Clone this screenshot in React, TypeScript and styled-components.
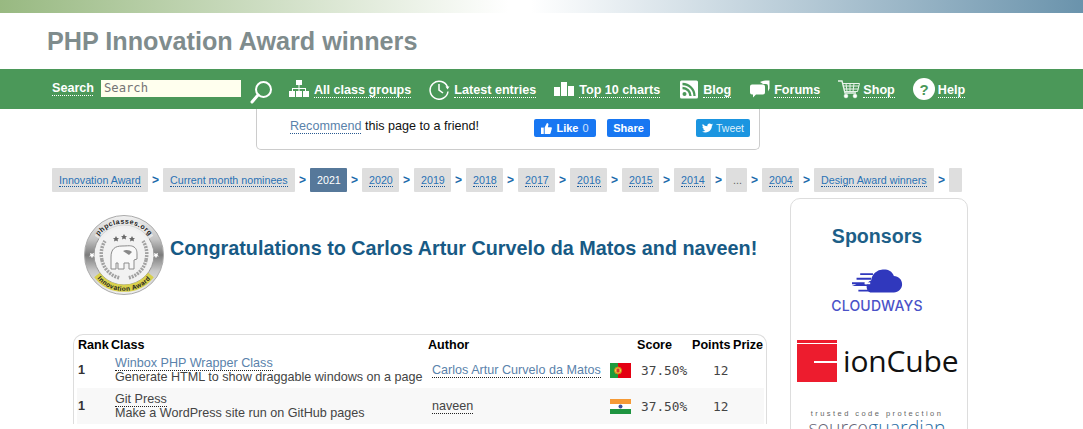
import React from "react";
import styled, { createGlobalStyle } from "styled-components";

const Global = createGlobalStyle`
  html, body { margin: 0; padding: 0; background: #fff; height: 429px; overflow: hidden; }
  body { font-family: "Liberation Sans", Arial, sans-serif; color: #222; }
  a { text-decoration: none; }
`;

const Page = styled.div`
  width: 1083px;
  height: 429px;
  overflow: hidden;
`;
const TopStrip = styled.div`
  height: 13px;
  background: linear-gradient(to right, #98b981 0%, #ffffff 47%, #ffffff 49%, #6a93ac 100%);
`;
const TitleBar = styled.header`
  height: 56px;
  display: flex;
  align-items: center;
  padding-left: 47px;
`;
const Title = styled.h1`
  margin: 0;
  font-size: 25.2px;
  font-weight: 700;
  color: #7f8c8d;
`;
const NavBar = styled.nav`
  height: 40px;
  background: #4b9859;
  display: flex;
  align-items: center;
  padding-left: 52px;
`;
const SearchLabel = styled.a`
  color: #fff;
  font-size: 12.6px;
  font-weight: 700;
  border-bottom: 1px dotted #fff;
  line-height: 14px;
  margin-top: -2px;
  margin-right: 8px;
  width: 41px;
`;
const SearchInput = styled.input`
  width: 140px;
  height: 17px;
  box-sizing: border-box;
  border: 0;
  padding: 0 3px;
  margin-top: -2px;
  background: #ffffee;
  font-family: "DejaVu Sans Mono", monospace;
  font-size: 12.2px;
  &::placeholder { color: #757575; opacity: 1; }
`;
const SearchButton = styled.span`
  display: flex;
  margin-left: 9px;
  margin-right: 16px;
  margin-top: 5px;
`;
const NavItem = styled.a<{ $gap: number; $after: number }>`
  display: flex;
  align-items: center;
  gap: ${(p) => p.$gap}px;
  margin-right: ${(p) => p.$after}px;
`;
const NavText = styled.span`
  color: #fff;
  font-size: 12.6px;
  font-weight: 700;
  line-height: 14px;
  border-bottom: 1px dotted #fff;
  margin-top: 3px;
`;

const ShareBox = styled.div`
  width: 504px;
  height: 41px;
  margin-left: 256px;
  box-sizing: border-box;
  border: 1px solid #ccc;
  border-top: 0;
  border-radius: 0 0 5px 5px;
  display: flex;
  align-items: flex-start;
  padding: 10px 9px 0 33px;
`;
const RecommendText = styled.div`
  font-size: 12.6px;
  line-height: 14px;
  color: #111;
  width: 244px;
`;
const BlueLink = styled.a`
  color: #5a82ab;
  border-bottom: 1px dotted #2a5a90;
`;
const FbButton = styled.span<{ $w: number; $after: number }>`
  width: ${(p) => p.$w}px;
  height: 18px;
  margin-right: ${(p) => p.$after}px;
  background: #1877f2;
  border-radius: 2px;
  color: #fff;
  font-size: 11px;
  font-weight: 700;
  display: flex;
  align-items: center;
  justify-content: center;
  gap: 4px;
`;
const FbCount = styled.span`
  font-weight: 400;
  opacity: 0.8;
`;
const TweetButton = styled.span`
  width: 54px;
  height: 18px;
  margin-left: auto;
  background: #1b95e0;
  border-radius: 2px;
  color: #dff0fb;
  font-size: 10.5px;
  display: flex;
  align-items: center;
  justify-content: center;
  gap: 3px;
`;

const Crumbs = styled.div`
  display: flex;
  align-items: center;
  margin: 18px 0 0 52px;
  height: 24px;
`;
const Crumb = styled.span<{ $active?: boolean; $w?: number }>`
  height: 24px;
  width: ${(p) => (p.$w ? `${p.$w}px` : "13px")};
  flex-shrink: 0;
  box-sizing: border-box;
  padding: 0 0 0 7px;
  display: flex;
  align-items: center;
  font-size: 10.7px;
  white-space: nowrap;
  border-radius: 1px;
  background: ${(p) => (p.$active ? "#56789a" : "#dedede")};
  color: ${(p) => (p.$active ? "#fff" : "#666")};
`;
const CrumbLink = styled.a`
  color: #2a72b5;
  line-height: 12px;
  border-bottom: 1px dotted #1a5a9a;
`;
const Sep = styled.span`
  width: 7px;
  margin: 0 4px;
  font-size: 12px;
  font-weight: 700;
  color: #1a6bab;
`;

const Main = styled.div`
  display: flex;
  align-items: flex-start;
  margin-top: 6px;
`;
const LeftColumn = styled.main`
  width: 694px;
  margin-left: 73px;
  margin-right: 23px;
`;
const Congrats = styled.div`
  display: flex;
  align-items: center;
  height: 80px;
  margin: 17px 0 39px 11px;
  gap: 6px;
`;
const CongratsTitle = styled.h2`
  margin: -14px 0 0;
  font-size: 19.8px;
  font-weight: 700;
  color: #175a85;
  white-space: nowrap;
`;
const Table = styled.div`
  box-sizing: border-box;
  width: 694px;
  border: 1px solid #ddd;
  border-bottom: 0;
  border-radius: 10px 10px 0 0;
  padding: 0 2px 0 3px;
`;
const cols = "33px 317px 179px 30px 55px 41px 31px";
const HeadRow = styled.div`
  display: grid;
  grid-template-columns: ${cols};
  height: 19px;
  align-items: center;
`;
const HeadCell = styled.div<{ $span?: number }>`
  grid-column: span ${(p) => p.$span ?? 1};
  font-size: 12.6px;
  font-weight: 700;
  color: #000;
  padding-left: 1px;
  white-space: nowrap;
`;
const Row = styled.div<{ $even?: boolean; $h: number }>`
  display: grid;
  box-sizing: border-box;
  grid-template-columns: ${cols};
  height: ${(p) => p.$h}px;
  padding-bottom: ${(p) => (p.$even ? 0 : 2)}px;
  align-items: center;
  background: ${(p) => (p.$even ? "#f8f8f8" : "#fff")};
`;
const RankCell = styled.div`
  font-size: 12.6px;
  font-weight: 700;
  color: #333;
  padding-left: 1px;
`;
const ClassCell = styled.div`
  padding-left: 5px;
  font-size: 12.6px;
  line-height: 14px;
  color: #444;
  white-space: nowrap;
`;
const ClassLink = styled.a<{ $dark?: boolean }>`
  display: inline-block;
  color: ${(p) => (p.$dark ? "#444" : "#5a82ab")};
  line-height: 13px;
  border-bottom: 1px dotted #222;
  vertical-align: top;
`;
const ClassDesc = styled.div`
  margin-top: -1px;
`;
const AuthorCell = styled.div`
  padding-left: 5px;
  font-size: 12.6px;
  white-space: nowrap;
`;
const AuthorLink = styled.a<{ $dark?: boolean }>`
  color: ${(p) => (p.$dark ? "#444" : "#5a82ab")};
  border-bottom: 1px dotted #222;
`;
const FlagCell = styled.div`
  display: flex;
  padding-left: 4px;
`;
const MonoCell = styled.div<{ $pad: number }>`
  font-family: "DejaVu Sans Mono", monospace;
  font-size: 12.8px;
  color: #444;
  padding-left: ${(p) => p.$pad}px;
`;

const Sidebar = styled.aside`
  box-sizing: border-box;
  width: 178px;
  height: 260px;
  border: 1px solid #ddd;
  border-radius: 10px;
  padding-right: 4px;
  display: flex;
  flex-direction: column;
  align-items: center;
`;
const SponsorTitle = styled.h3`
  margin: 25px 0 0;
  font-size: 19.6px;
  line-height: 24px;
  font-weight: 700;
  color: #1d5f88;
`;
const CloudWrap = styled.div`
  margin-top: 19px;
  display: flex;
  height: 28px;
`;
const CloudText = styled.div`
  font-family: "Inter", "Liberation Sans", sans-serif;
  font-size: 14px;
  font-weight: 500;
  line-height: 16px;
  letter-spacing: 0.2px;
  color: #4a52c8;
  margin-top: 3px;
`;
const IonRow = styled.div`
  display: flex;
  align-items: center;
  align-self: flex-start;
  margin: 25px 0 0 6px;
  gap: 6px;
`;
const IonText = styled.span`
  font-family: "Open Sans", sans-serif;
  font-size: 30px;
  line-height: 42px;
  color: #111;
  letter-spacing: -0.15px;
  margin-top: 1px;
`;
const SgTagline = styled.div`
  margin-top: 27px;
  font-size: 7.5px;
  line-height: 9px;
  letter-spacing: 2.45px;
  color: #666;
  white-space: nowrap;
`;
const SgName = styled.div`
  font-family: "Open Sans", sans-serif;
  font-size: 19.5px;
  font-weight: 300;
  line-height: 19px;
  color: #667;
`;
const SgBlue = styled.span`
  color: #2a6ea5;
`;

const I = { w: "#fff" };

const SearchIcon = () => (
  <svg width="23" height="24" viewBox="0 0 23 24" fill="none" stroke={I.w}>
    <circle cx="13.5" cy="9.5" r="7.5" strokeWidth="2" />
    <path d="M8 15 L2 22" strokeWidth="3" strokeLinecap="round" />
  </svg>
);
const TreeIcon = () => (
  <svg width="20" height="18" viewBox="0 0 20 18" fill={I.w}>
    <rect x="7" y="0" width="6" height="5" />
    <path d="M9.500 5h1v3H17v3h-1V9h-5.500v2h-1V9H4v2H3V8h6.500z" />
    <rect x="0" y="11" width="6" height="6" />
    <rect x="7" y="11" width="6" height="6" />
    <rect x="14" y="11" width="6" height="6" />
  </svg>
);
const ClockIcon = () => (
  <svg width="21" height="21" viewBox="0 0 21 21" fill="none" stroke={I.w} strokeWidth="1.5">
    <path d="M18.500 8A9 9 0 1 0 19 12.500" />
    <path d="M10 5v6l4 3" />
    <path d="M16.500 7.500h4l-2 3z" fill={I.w} stroke="none" />
  </svg>
);
const BarsIcon = () => (
  <svg width="20" height="14" viewBox="0 0 20 14" fill={I.w}>
    <rect x="0" y="5" width="6" height="9" />
    <rect x="7" y="0" width="6" height="14" />
    <rect x="14" y="4" width="6" height="10" />
  </svg>
);
const RssIcon = () => (
  <svg width="18" height="19" viewBox="0 0 18 18">
    <rect width="18" height="18" rx="1.500" fill={I.w} />
    <circle cx="4.500" cy="13.500" r="2" fill="#4b9859" />
    <path d="M2.500 7.500a8 8 0 0 1 8 8M2.500 3.500a12 12 0 0 1 12 12" fill="none" stroke="#4b9859" strokeWidth="2.300" />
  </svg>
);
const ForumIcon = () => (
  <svg width="21" height="18" viewBox="0 0 21 18" fill={I.w}>
    <path d="M11 2c3-1.500 6-1.500 9.500-1.500v8l-1.500 3V6a2 2 0 0 0-2-2h-3z" />
    <path d="M3 4.500h11a2 2 0 0 1 2 2v6a2 2 0 0 1-2 2H7l-3 3v-3H3a2 2 0 0 1-2-2v-6a2 2 0 0 1 2-2z" />
  </svg>
);
const CartIcon = () => (
  <svg width="22" height="19" viewBox="0 0 22 19" fill="none" stroke="#e8f3ea" strokeWidth="1">
    <path d="M0 1h4l3 12h11" strokeWidth="1.400" />
    <path d="M4.500 3.500H21.500l-2 8H6.500M8 3.500l1 8M12 3.500v8M16 3.500l-1 8M5 6h16M6 9h14.500" />
    <circle cx="8" cy="16" r="1.800" fill={I.w} />
    <circle cx="17" cy="16" r="1.800" fill={I.w} />
  </svg>
);
const HelpIcon = () => (
  <svg width="22" height="22" viewBox="0 0 22 22">
    <circle cx="11" cy="11" r="11" fill={I.w} />
    <text x="11" y="16.500" textAnchor="middle" fontFamily="Liberation Sans" fontWeight="700" fontSize="15" fill="#4b9859">?</text>
  </svg>
);
const ThumbIcon = () => (
  <svg width="11" height="11" viewBox="0 0 12 12" fill="#fff">
    <rect x="0" y="5" width="3" height="7" />
    <path d="M4 5l2.500-5c1.500 0 2 1 1.500 2.500L7.500 4.500H11c1 0 1 1 .8 1.500L10.500 11c-.2.600-.5 1-1 1H4z" />
  </svg>
);
const BirdIcon = () => (
  <svg width="11" height="10" viewBox="0 0 24 20" fill="#fff">
    <path d="M24 2.400a9.800 9.800 0 0 1-2.800.8A4.900 4.900 0 0 0 23.300.5a9.800 9.800 0 0 1-3.100 1.200 4.900 4.900 0 0 0-8.400 4.500A14 14 0 0 1 1.700 1a4.900 4.900 0 0 0 1.500 6.600 4.900 4.900 0 0 1-2.200-.6c0 2.400 1.700 4.400 4 4.900a4.900 4.900 0 0 1-2.200.1 4.900 4.900 0 0 0 4.600 3.400A9.900 9.900 0 0 1 0 17.400 14 14 0 0 0 7.500 19.600c9.100 0 14-7.500 14-14v-.6A10 10 0 0 0 24 2.400z" />
  </svg>
);

const Medal = () => (
  <svg width="80" height="80" viewBox="0 0 80 80">
    <defs>
      <linearGradient id="ring" x1="0" y1="0" x2="0" y2="1">
        <stop offset="0" stopColor="#f2f2f2" />
        <stop offset="0.3" stopColor="#c4c4c4" />
        <stop offset="0.5" stopColor="#7c7c7c" />
        <stop offset="0.7" stopColor="#c8c8c8" />
        <stop offset="1" stopColor="#f0f0f0" />
      </linearGradient>
    </defs>
    <circle cx="40" cy="40" r="39.500" fill="url(#ring)" />
    <circle cx="40" cy="40" r="39.500" fill="none" stroke="#aaa" />
    <circle cx="40" cy="40" r="30" fill="#f2f2f2" stroke="#999" />
    <path d="M18 45a23 23 0 0 0 18 18M62 45a23 23 0 0 1-18 18M18 45a24 24 0 0 1 3-19M62 45a24 24 0 0 0-3-19" fill="none" stroke="#a2a2a2" strokeWidth="3.500" strokeDasharray="2 1" />
    <path d="M27 42c0-8 4-11 11-11 6 0 9-1 12 1 3 2 3 5 3 8v4l-3 1v9h-5v-6h-5v6h-6v-6h-2v6h-5z" fill="#f8f8f8" stroke="#8c8c8c" />
    <path d="M39 36c3-2 7-1 9 1l-3 3z" fill="#888" />
    <path d="M6 38l2 .8 2-.8-.5 2 1.500 1.500-2-.2-1 2-1-2-2 .2L6.500 40zM70 38l2 .8 2-.8-.5 2 1.500 1.500-2-.2-1 2-1-2-2 .2L70.500 40z" fill="#fff" />
    <path d="M32 21l1 2 2 .2-1.500 1.300.5 2-2-1-2 1 .5-2L29 23.200l2-.2zM40 19l1 2 2 .2-1.500 1.300.5 2-2-1-2 1 .5-2L37 21.200l2-.2zM48 21l1 2 2 .2-1.500 1.300.5 2-2-1-2 1 .5-2L45 23.200l2-.2z" fill="#666" />
    <path d="M14 23a31 31 0 0 1 52 0" fill="none" stroke="#eee" strokeWidth="8" opacity="0.7" />
    <path d="M13 60a34 34 0 0 0 54 0" fill="none" stroke="#d8d04c" strokeWidth="7" />
    <path id="topArc" d="M11 27a32 32 0 0 1 58 0" fill="none" />
    <path id="bottomArc" d="M12 62a35 35 0 0 0 56 0" fill="none" />
    <text fontFamily="Liberation Sans" fontWeight="700" fontSize="7" fill="#222" letterSpacing="0.5">
      <textPath href="#topArc" startOffset="50%" textAnchor="middle">phpclasses.org</textPath>
    </text>
    <text fontFamily="Liberation Sans" fontWeight="700" fontSize="6.5" fill="#222" letterSpacing="0.4">
      <textPath href="#bottomArc" startOffset="50%" textAnchor="middle">Innovation Award</textPath>
    </text>
  </svg>
);
const CloudLogo = () => (
  <svg width="51" height="28" viewBox="0 0 56 29" fill="#3038bd">
    <path d="M20 27a7 7 0 0 1 1-13 13 13 0 0 1 14-12c5 0 9 2 11 7 5 0 9 4 9 9s-4 9-9 9z" />
    <path d="M9 6h14v2H9zM5 11h16v2H5zM0 16h14v2H0zM0 20h19v-2H5zM7 24h12v2H7z" />
    <rect x="14" y="16" width="6" height="2" fill="#fff" />
  </svg>
);
const IonBox = () => (
  <svg width="40" height="42" viewBox="0 0 40 42">
    <rect width="40" height="42" fill="#ed1c2e" />
    <rect y="3" width="40" height="1" fill="#fff" />
    <rect x="17" y="21" width="23" height="2" fill="#fff" />
  </svg>
);
const PortugalFlag = () => (
  <svg width="21" height="15" viewBox="0 0 21 15">
    <rect width="21" height="15" fill="#e40012" />
    <rect width="8" height="15" fill="#1f9a3d" />
    <circle cx="8" cy="7.500" r="3.500" fill="#f3d24a" stroke="#c68a10" />
    <rect x="6.500" y="5.500" width="3" height="4" fill="#d8362a" />
  </svg>
);
const IndiaFlag = () => (
  <svg width="21" height="15" viewBox="0 0 21 15">
    <rect width="21" height="5" fill="#f59a36" />
    <rect y="5" width="21" height="5" fill="#fff" />
    <rect y="10" width="21" height="5" fill="#1e9440" />
    <circle cx="10.500" cy="7.500" r="2" fill="#3a4f9a" />
  </svg>
);

const years = ["2020", "2019", "2018", "2017", "2016", "2015", "2014"];

export default function App() {
  return (
    <Page>
      <Global />
      <TopStrip />
      <TitleBar>
        <Title>PHP Innovation Award winners</Title>
      </TitleBar>
      <NavBar>
        <SearchLabel>Search</SearchLabel>
        <SearchInput placeholder="Search" />
        <SearchButton><SearchIcon /></SearchButton>
        <NavItem $gap={5} $after={18}><TreeIcon /><NavText>All class groups</NavText></NavItem>
        <NavItem $gap={4} $after={18}><ClockIcon /><NavText>Latest entries</NavText></NavItem>
        <NavItem $gap={5} $after={20}><BarsIcon /><NavText>Top 10 charts</NavText></NavItem>
        <NavItem $gap={5} $after={18}><RssIcon /><NavText>Blog</NavText></NavItem>
        <NavItem $gap={4} $after={18}><ForumIcon /><NavText>Forums</NavText></NavItem>
        <NavItem $gap={3} $after={18}><CartIcon /><NavText>Shop</NavText></NavItem>
        <NavItem $gap={3} $after={0}><HelpIcon /><NavText>Help</NavText></NavItem>
      </NavBar>
      <ShareBox>
        <RecommendText><BlueLink>Recommend</BlueLink> this page to a friend!</RecommendText>
        <FbButton $w={62} $after={11}><ThumbIcon />Like <FbCount>0</FbCount></FbButton>
        <FbButton $w={43} $after={0}>Share</FbButton>
        <TweetButton><BirdIcon />Tweet</TweetButton>
      </ShareBox>
      <Crumbs>
        <Crumb $w={96}><CrumbLink>Innovation Award</CrumbLink></Crumb><Sep>&gt;</Sep>
        <Crumb $w={132}><CrumbLink>Current month nominees</CrumbLink></Crumb><Sep>&gt;</Sep>
        <Crumb $active $w={37}>2021</Crumb><Sep>&gt;</Sep>
        {years.map((y) => (
          <React.Fragment key={y}>
            <Crumb $w={37}><CrumbLink>{y}</CrumbLink></Crumb><Sep>&gt;</Sep>
          </React.Fragment>
        ))}
        <Crumb $w={21}>...</Crumb><Sep>&gt;</Sep>
        <Crumb $w={37}><CrumbLink>2004</CrumbLink></Crumb><Sep>&gt;</Sep>
        <Crumb $w={120}><CrumbLink>Design Award winners</CrumbLink></Crumb><Sep>&gt;</Sep>
        <Crumb />
      </Crumbs>
      <Main>
        <LeftColumn>
          <Congrats>
            <Medal />
            <CongratsTitle>Congratulations to Carlos Artur Curvelo da Matos and naveen!</CongratsTitle>
          </Congrats>
          <Table>
            <HeadRow>
              <HeadCell>Rank</HeadCell>
              <HeadCell>Class</HeadCell>
              <HeadCell $span={2}>Author</HeadCell>
              <HeadCell>Score</HeadCell>
              <HeadCell>Points</HeadCell>
              <HeadCell>Prize</HeadCell>
            </HeadRow>
            <Row $h={34}>
              <RankCell>1</RankCell>
              <ClassCell>
                <ClassLink>Winbox PHP Wrapper Class</ClassLink>
                <ClassDesc>Generate HTML to show draggable windows on a page</ClassDesc>
              </ClassCell>
              <AuthorCell><AuthorLink>Carlos Artur Curvelo da Matos</AuthorLink></AuthorCell>
              <FlagCell><PortugalFlag /></FlagCell>
              <MonoCell $pad={5}>37.50%</MonoCell>
              <MonoCell $pad={22}>12</MonoCell>
              <div />
            </Row>
            <Row $even $h={36}>
              <RankCell>1</RankCell>
              <ClassCell>
                <ClassLink $dark>Git Press</ClassLink>
                <ClassDesc>Make a WordPress site run on GitHub pages</ClassDesc>
              </ClassCell>
              <AuthorCell><AuthorLink $dark>naveen</AuthorLink></AuthorCell>
              <FlagCell><IndiaFlag /></FlagCell>
              <MonoCell $pad={5}>37.50%</MonoCell>
              <MonoCell $pad={22}>12</MonoCell>
              <div />
            </Row>
          </Table>
        </LeftColumn>
        <Sidebar>
          <SponsorTitle>Sponsors</SponsorTitle>
          <CloudWrap><CloudLogo /></CloudWrap>
          <CloudText>CLOUDWAYS</CloudText>
          <IonRow><IonBox /><IonText>ionCube</IonText></IonRow>
          <SgTagline>trusted code protection</SgTagline>
          <SgName>source<SgBlue>guardian</SgBlue></SgName>
        </Sidebar>
      </Main>
    </Page>
  );
}
